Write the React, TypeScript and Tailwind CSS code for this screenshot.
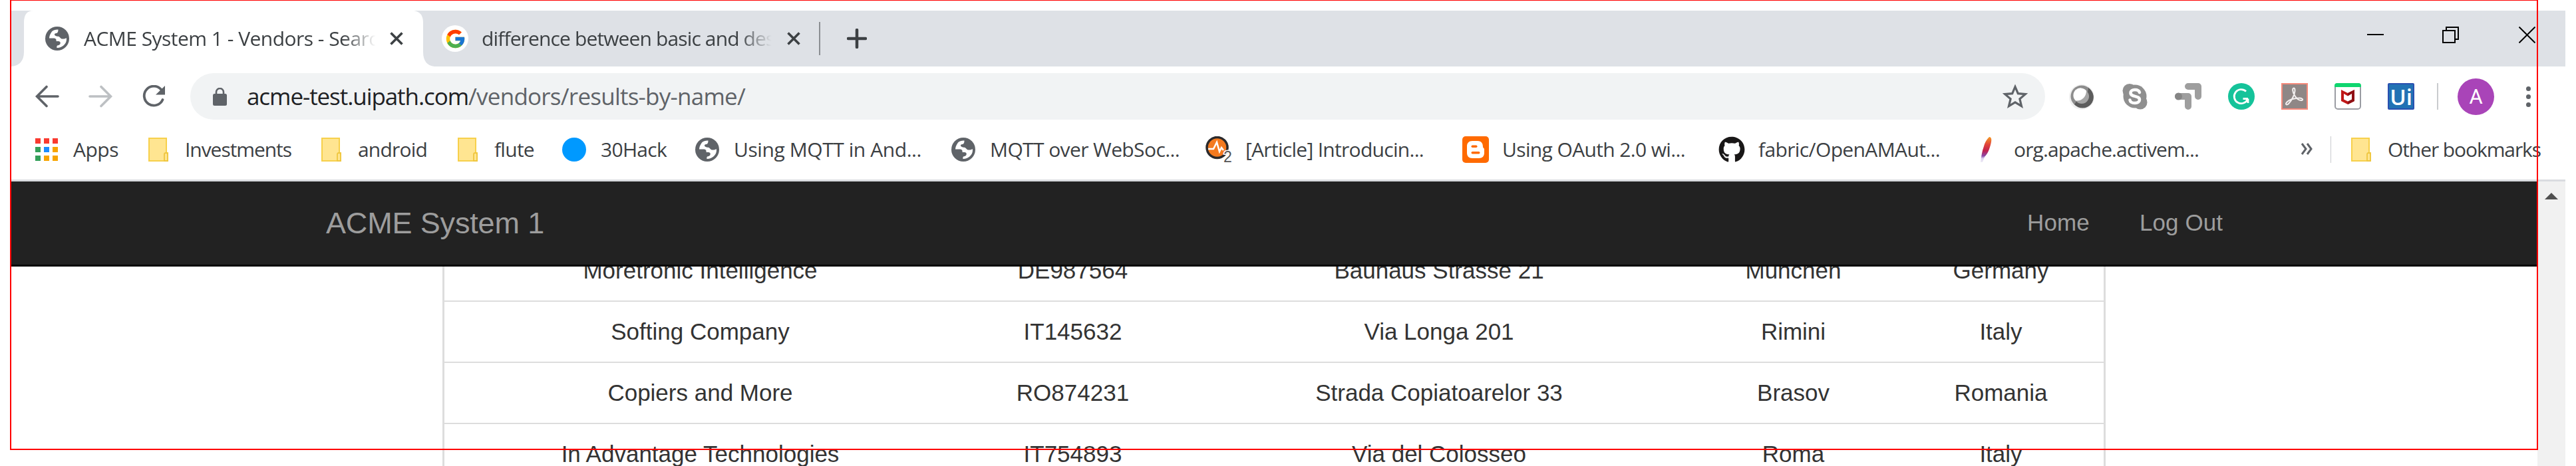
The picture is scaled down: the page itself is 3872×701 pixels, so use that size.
import React, { useLayoutEffect, useRef, useState } from "react";
import { FaGithub } from "react-icons/fa";
import { FcGoogle } from "react-icons/fc";

/* Text set to a known advance width by evening out its letter spacing. */
function Fit({ text, width, className = "" }: { text: string; width: number; className?: string }) {
  const ref = useRef<HTMLSpanElement>(null);
  const [spacing, setSpacing] = useState(0);
  useLayoutEffect(() => {
    if (ref.current) {
      const natural = ref.current.getBoundingClientRect().width;
      setSpacing((width - natural) / text.length);
    }
  }, [text, width]);
  return (
    <span ref={ref} className={`shrink-0 whitespace-pre ${className}`} style={{ letterSpacing: `${spacing}px` }}>
      {text}
    </span>
  );
}

function Globe() {
  return (
    <svg className="h-9 w-9 shrink-0" viewBox="0 0 36 36">
      <circle cx="18" cy="18" r="18" fill="#5f6368" />
      <path
        d="M19.5 4.5c-5 0-8.500 1-10.500 4.500-2 3-2.800 5.500-3 8.500h7.500c2.500.5 3.500 2 3 4.500h3.500c2.500.2 3.200 1.800 2.500 4-.5 1.800-3 2-4.500 2.500-.8 1.200-.8 2.500-.5 3.500 7.500.2 14.500-5.500 14.500-13 0-.8-.2-1.500-.5-2-1.500 1.500-4 1.800-6.500 1.500-2-.5-2.500-2.500-4.500-3.500-2.500-.5-6.500-.8-6.500-3 0-2 2.500-1.800 4-2.500 1.200-1 1.500-3 1.500-5z"
        fill="#fff"
      />
    </svg>
  );
}

function Folder() {
  return (
    <svg className="h-9 w-[30px] shrink-0" viewBox="0 0 30 36">
      <path d="M1 1h26v22h2v12H1z" fill="#ffe591" stroke="#f7d04b" strokeWidth="2" />
      <path d="M24 35V25q0-2 2.500-2T29 25v10z" fill="#ffe591" stroke="#efc63f" strokeWidth="1.800" />
    </svg>
  );
}

function CloseX() {
  return (
    <svg className="h-5 w-5 shrink-0" viewBox="0 0 20 20">
      <path d="M1.500 1.500l17 17M18.500 1.500l-17 17" stroke="#3c4043" strokeWidth="3.600" />
    </svg>
  );
}

function AppsGrid() {
  const colors = ["#f93a30", "#f93a30", "#f93a30", "#34a05a", "#1a8cff", "#f7a400", "#34a05a", "#f7a400", "#f7a400"];
  return (
    <div className="grid grid-cols-3 gap-x-[5px] gap-y-[5px]">
      {colors.map((c, i) => (
        <div key={i} className="h-2 w-2" style={{ backgroundColor: c }} />
      ))}
    </div>
  );
}

function PulseIcon() {
  return (
    <svg className="h-10 w-10" viewBox="0 0 40 40">
      <circle cx="17.500" cy="17" r="15.500" fill="#f47a1f" stroke="#2b2a2c" strokeWidth="3.500" />
      <path d="M4 19h8l5-10 4 14 3-6 3 4" fill="none" stroke="#fff" strokeWidth="2.500" />
      <text x="27" y="39" fontFamily="Liberation Sans" fontSize="23" fill="#555" stroke="#fff" strokeWidth="3" paintOrder="stroke">
        2
      </text>
    </svg>
  );
}

function BloggerIcon() {
  return (
    <svg className="h-10 w-10" viewBox="0 0 40 40">
      <rect width="40" height="40" rx="5" fill="#ff6a00" />
      <path d="M15 7h8c6 0 8 4 8 9 0 2 2 1 2 4v5c0 5-3 8-8 8H15c-5 0-8-3-8-8V15c0-5 3-8 8-8z" fill="#fff" />
      <rect x="13.500" y="13.500" width="9" height="3.500" rx="1.700" fill="#ff6a00" />
      <rect x="13.500" y="23" width="13" height="3.500" rx="1.700" fill="#ff6a00" />
    </svg>
  );
}

function FeatherIcon() {
  return (
    <svg className="h-10 w-10" viewBox="0 0 40 40">
      <defs>
        <linearGradient id="feather" x1="0" y1="0" x2="0" y2="1">
          <stop offset="0" stopColor="#f59a23" />
          <stop offset="0.300" stopColor="#e0443a" />
          <stop offset="0.550" stopColor="#c0204f" />
          <stop offset="0.750" stopColor="#8a4aa8" />
          <stop offset="0.850" stopColor="#dcd3ee" />
          <stop offset="1" stopColor="#eeeaf6" />
        </linearGradient>
      </defs>
      <path d="M23 1c4 0 4 5 2 12-2 7-4 13-9 18l-3 8h-3c1-8 2-16 5-24 2-7 5-11 8-14z" fill="url(#feather)" />
    </svg>
  );
}

const bookmarks: { label: string; width: number; slot: string; icon: React.ReactNode }[] = [
  { label: "Apps", width: 68, slot: "w-[168px]", icon: <AppsGrid /> },
  { label: "Investments", width: 160, slot: "w-[260px]", icon: <Folder /> },
  { label: "android", width: 104, slot: "w-[205px]", icon: <Folder /> },
  { label: "flute", width: 60, slot: "w-[160px]", icon: <Folder /> },
  { label: "30Hack", width: 99, slot: "w-[200px]", icon: <div className="h-9 w-9 rounded-full bg-[#0099ff]" /> },
  { label: "Using MQTT in And...", width: 282, slot: "w-[385px]", icon: <Globe /> },
  { label: "MQTT over WebSoc...", width: 285, slot: "w-[384px]", icon: <Globe /> },
  { label: "[Article] Introducin...", width: 268, slot: "w-[386px]", icon: <PulseIcon /> },
  { label: "Using OAuth 2.0 wi...", width: 275, slot: "w-[385px]", icon: <BloggerIcon /> },
  { label: "fabric/OpenAMAut...", width: 273, slot: "w-[384px]", icon: <FaGithub className="h-10 w-10 text-[#191717]" /> },
  { label: "org.apache.activem...", width: 278, slot: "w-[484px]", icon: <FeatherIcon /> },
];

const rows: [string, string, string, string, string][] = [
  ["Moretronic Intelligence", "DE987564", "Bauhaus Strasse 21", "Munchen", "Germany"],
  ["Softing Company", "IT145632", "Via Longa 201", "Rimini", "Italy"],
  ["Copiers and More", "RO874231", "Strada Copiatoarelor 33", "Brasov", "Romania"],
  ["In Advantage Technologies", "IT754893", "Via del Colosseo", "Roma", "Italy"],
];

function TabStrip() {
  return (
    <div className="relative flex h-[84px] bg-[#dee1e6] text-[30px] leading-[42px] text-[#3c4043]">
      <svg className="h-[84px] w-[638px] shrink-0" viewBox="0 0 638 84">
        <path d="M0 84Q19 82 19 62V18Q19 0 33 0H605Q619 2 619 18V62Q619 82 636 84Z" fill="#fff" />
      </svg>
      <div className="absolute top-0 left-0 flex h-[84px] w-[619px] items-center pl-[51px]">
        <Globe />
        <div className="ml-[22px] flex w-[443px] overflow-hidden [mask-image:linear-gradient(to_right,#000_88%,transparent_99%)]">
          <Fit text="ACME System 1 - Vendors - Search" width={460} />
        </div>
        <div className="ml-[17px] flex">
          <CloseX />
        </div>
      </div>
      <div className="flex items-center pl-[9px]">
        <div className="flex h-10 w-10 items-center justify-center rounded-full bg-white">
          <FcGoogle className="h-[33px] w-[33px]" />
        </div>
        <div className="ml-[20px] flex w-[440px] overflow-hidden [mask-image:linear-gradient(to_right,#000_88%,transparent_99%)]">
          <Fit text="difference between basic and desc" width={454} />
        </div>
        <div className="ml-[19px] flex">
          <CloseX />
        </div>
        <div className="ml-[28px] h-[50px] w-[2px] bg-[#8b8e92]" />
        <svg className="ml-[40px] h-[30px] w-[30px]" viewBox="0 0 30 30">
          <path d="M15 2v26M2 15h26" stroke="#3c4043" strokeWidth="4.500" strokeLinecap="round" />
        </svg>
      </div>
      <div className="ml-auto flex items-center pr-[45px] pb-[12px]">
        <div className="mr-[88px] h-[2px] w-[25px] bg-black" />
        <svg className="mr-[90px] h-[25px] w-[25px]" viewBox="0 0 25 25">
          <path d="M1 6h18v18H1zM6 6V1h18v18h-5" fill="none" stroke="#000" strokeWidth="2" />
        </svg>
        <svg className="h-[25px] w-[25px]" viewBox="0 0 25 25">
          <path d="M.5.5l24 24M24.500.5l-24 24" stroke="#000" strokeWidth="2" />
        </svg>
      </div>
    </div>
  );
}

function Extensions() {
  return (
    <div className="ml-[35px] flex items-center gap-10">
      <svg className="h-10 w-10" viewBox="0 0 40 40">
        <circle cx="20" cy="21" r="19" fill="#f0f0f0" />
        <circle cx="20" cy="20" r="16.500" fill="#8d8d8d" />
        <path d="M30 7A16.500 16.500 0 1 1 9 32l4-6c8 2 16-5 17-19z" fill="#5c5c5c" />
        <circle cx="20" cy="20" r="11" fill="#a5a5a5" />
        <path d="M27 11.500A11 11 0 1 0 11 26.500c9 1 16-6 16-15z" fill="#fff" />
      </svg>
      <svg className="h-10 w-10" viewBox="0 0 40 40">
        <g fill="#8f8f8f">
          <circle cx="20" cy="20" r="17.500" />
          <circle cx="12" cy="11.500" r="10.500" />
          <circle cx="28" cy="29" r="10.500" />
        </g>
        <path
          d="M27 14c-1-3-3.500-4-7-4-4 0-6.500 1.800-6.500 4.700 0 7 13.500 3.300 13.500 10.300 0 3.200-2.800 5-7 5s-7-1.500-7.500-4.500"
          fill="none"
          stroke="#fff"
          strokeWidth="4.500"
          strokeLinecap="round"
        />
      </svg>
      <svg className="h-10 w-10" viewBox="0 0 40 40">
        <path d="M20 5h15v15M5 20h15v15" fill="none" stroke="#9e9e9e" strokeWidth="10" strokeLinecap="round" strokeLinejoin="round" />
        <circle cx="5.500" cy="20" r="5.500" fill="#858585" />
      </svg>
      <svg className="h-10 w-10" viewBox="0 0 40 40">
        <circle cx="20" cy="20" r="20" fill="#15c39a" />
        <path d="M27 12.500A10.500 10.500 0 1 0 29.500 24M22.500 23.500h7.500M30 30v-6.500" fill="none" stroke="#fff" strokeWidth="2.800" />
      </svg>
      <svg className="h-10 w-10" viewBox="0 0 40 40">
        <rect x="1" y="1" width="38" height="38" fill="#8f8786" stroke="#f58a7b" strokeWidth="2" />
        <path
          d="M19 7.500c-3 0-2 6 1 11 3 5 7 8 11 7.500 3-1 0-4-5-3.500-7 .5-13 2-17 5.500-4 4-1 6 2 3 5-5 9-14 9.500-19 .2-3-.5-4.500-1.500-4.500z"
          fill="none"
          stroke="#f3efef"
          strokeWidth="2"
        />
      </svg>
      <svg className="h-10 w-10" viewBox="0 0 40 40">
        <rect x="1" y="1" width="38" height="38" rx="4" fill="#fff" stroke="#9a9ca3" strokeWidth="2" />
        <path d="M0 6V4q0-4 4-4h32q4 0 4 4v2z" fill="#0fd66f" />
        <path d="M10 10l10 5 10-5v17l-10 5-10-5z" fill="#c01818" />
        <path d="M20 15l10-5v17l-10 5v-5l6-3v-7.500l-6 3.500z" fill="#8f0f14" />
        <path d="M14 16l6 3.500 6-3.500v8.500l-6 3-6-3z" fill="#fff" />
      </svg>
      <div className="flex h-10 w-10 items-center justify-center rounded-[2px] border-2 border-[#2a50b0] bg-[#2172b4] font-['Open_Sans',sans-serif] text-[33px] leading-none font-semibold text-white">
        Ui
      </div>
    </div>
  );
}

function Toolbar() {
  return (
    <div className="flex h-[90px] items-center pl-[36px]">
      <svg className="h-[34px] w-[36px]" viewBox="0 0 36 34">
        <path d="M34 17H3M17 2.500L2.500 17 17 31.500" fill="none" stroke="#5f6368" strokeWidth="3.600" strokeLinecap="round" />
      </svg>
      <svg className="ml-[44px] h-[34px] w-[36px]" viewBox="0 0 36 34">
        <path d="M2 17h31M19 2.500L33.500 17 19 31.500" fill="none" stroke="#bdc0c3" strokeWidth="3.600" strokeLinecap="round" />
      </svg>
      <svg className="ml-[44px] h-[34px] w-[36px]" viewBox="0 0 36 34">
        <path d="M29.500 7A14.500 14.500 0 1 0 31.500 22" fill="none" stroke="#5f6368" strokeWidth="3.800" strokeLinecap="round" />
        <path d="M35 1v13.500H21z" fill="#5f6368" />
      </svg>
      <div className="ml-[37px] flex h-[70px] w-[2788px] items-center rounded-full bg-[#f1f3f4] pr-[26px] pl-[34px] text-[35px] leading-[50px]">
        <svg className="h-[27px] w-[21px]" viewBox="0 0 21 27">
          <rect y="9" width="21" height="18" rx="2.500" fill="#5f6368" />
          <path d="M5 10V6.500a5.500 5.500 0 0 1 11 0V10" fill="none" stroke="#5f6368" strokeWidth="2.600" />
        </svg>
        <Fit className="ml-[30px] text-[#202124]" text="acme-test.uipath.com" width={333} />
        <Fit className="text-[#5f6368]" text="/vendors/results-by-name/" width={416} />
        <svg className="ml-auto h-[38px] w-[38px]" viewBox="0 0 38 38">
          <path
            d="M19 4.500l4.300 10.200 11 .9-8.400 7.200 2.600 10.800L19 27.800 9.500 33.600l2.600-10.800-8.400-7.200 11-.9z"
            fill="none"
            stroke="#5f6368"
            strokeWidth="3.200"
          />
        </svg>
      </div>
      <Extensions />
      <div className="ml-[34px] h-10 w-[2px] bg-[#c9cbce]" />
      <div className="ml-[29px] flex h-[55px] w-[55px] items-center justify-center rounded-full bg-[#a944b8] font-[Roboto,sans-serif] text-[31px] leading-none text-white">
        A
      </div>
      <div className="ml-[48px] flex flex-col gap-[5px]">
        <div className="h-[7px] w-[7px] rounded-full bg-[#5f6368]" />
        <div className="h-[7px] w-[7px] rounded-full bg-[#5f6368]" />
        <div className="h-[7px] w-[7px] rounded-full bg-[#5f6368]" />
      </div>
    </div>
  );
}

function BookmarkBar() {
  return (
    <div className="flex h-[80px] items-center pl-[33px] text-[30px] leading-[42px] text-[#3c4043]">
      {bookmarks.map((b) => (
        <div key={b.label} className={`flex shrink-0 items-center gap-5 pb-[10px] ${b.slot}`}>
          <div className="flex h-10 w-10 shrink-0 items-center justify-center">{b.icon}</div>
          <Fit text={b.label} width={b.width} />
        </div>
      ))}
      <svg className="mt-[-12px] ml-[6px] h-[20px] w-[20px] shrink-0" viewBox="0 0 20 20">
        <path d="M3 2l6 8-6 8M11 2l6 8-6 8" fill="none" stroke="#5f6368" strokeWidth="3" />
      </svg>
      <div className="mt-[-10px] ml-[26px] h-10 w-px shrink-0 bg-[#c9cbce]" />
      <div className="ml-[25px] flex shrink-0 items-center gap-5 pb-[10px]">
        <div className="flex h-10 w-10 items-center justify-center">
          <Folder />
        </div>
        <Fit text="Other bookmarks" width={230} />
      </div>
    </div>
  );
}

function VendorPage() {
  return (
    <div className="flex h-[428px]">
      <div className="flex w-[3797px] flex-col bg-white">
        <div className="flex h-[128px] shrink-0 items-center border-b-[3px] border-[#080808] bg-[#222] pr-[473px] pl-[473px] text-[35px] text-[#9d9d9d]">
          <Fit className="text-[45px] leading-[60px]" text="ACME System 1" width={328} />
          <Fit className="ml-auto" text="Home" width={94} />
          <Fit className="ml-[75px]" text="Log Out" width={125} />
        </div>
        <div className="ml-[648px] h-[300px] w-[2500px] overflow-hidden border-x-[3px] border-[#ddd] text-[35px] text-[#333]">
          <div className="mt-[-39px]">
            {rows.map((row) => (
              <div
                key={row[0]}
                className="grid h-[92px] grid-cols-[769px_351px_750px_315px_309px] items-center border-b-2 border-[#ddd] text-center"
              >
                {row.map((cell) => (
                  <div key={cell} className="leading-[50px] whitespace-nowrap">
                    {cell}
                  </div>
                ))}
              </div>
            ))}
          </div>
        </div>
      </div>
      <div className="flex w-[42px] justify-center bg-[#f1f1f1] pt-[17px]">
        <svg className="h-[10px] w-[20px]" viewBox="0 0 20 10">
          <path d="M10 0l10 10H0z" fill="#505050" />
        </svg>
      </div>
    </div>
  );
}

export default function App() {
  return (
    <div className="relative h-[701px] w-[3872px] overflow-hidden bg-white pt-4 pl-[17px] font-['Liberation_Sans',Arial,sans-serif]">
      <div className="w-[3839px]">
        <div className="font-['Open_Sans','Noto_Sans',sans-serif]">
          <TabStrip />
          <Toolbar />
          <BookmarkBar />
        </div>
        <div className="h-[3px] bg-[#dadce0]" />
        <VendorPage />
      </div>
      <div className="pointer-events-none absolute top-0 left-[15px] h-[677px] w-[3800px] border-2 border-t border-[#ff0000]" />
    </div>
  );
}
